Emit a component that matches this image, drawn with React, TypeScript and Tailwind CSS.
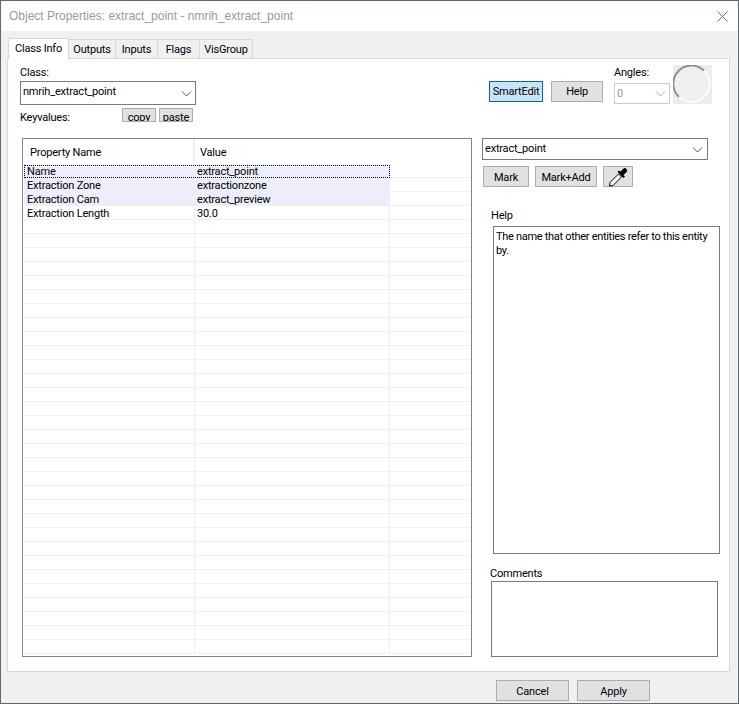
import React from 'react';

const Chevron: React.FC<{ className?: string }> = ({ className = '' }) => (
  <svg width="11" height="6" viewBox="0 0 11 6" className={className} fill="none" stroke="currentColor">
    <path d="M1 0.5 L5.5 5 L10 0.5" />
  </svg>
);

const Btn: React.FC<{ className?: string; active?: boolean; children: React.ReactNode }> = ({ className = '', active, children }) => (
  <div className={`flex items-center justify-center border ${active ? 'border-[#0a64ad] bg-[#cce4f7]' : 'border-[#adadad] bg-[#e1e1e1]'} ${className}`}>{children}</div>
);

const rows = [
  { name: 'Name', value: 'extract_point', tint: true, focus: true },
  { name: 'Extraction Zone', value: 'extractionzone', tint: true },
  { name: 'Extraction Cam', value: 'extract_preview', tint: true },
  { name: 'Extraction Length', value: '30.0' },
  ...Array.from({ length: 31 }, () => ({ name: '', value: '' })),
] as { name: string; value: string; tint?: boolean; focus?: boolean }[];

export default function App() {
  return (
    <div className='flex h-[704px] w-[739px] flex-col border border-[#5a6a70] bg-[#f0f0f0] font-["Roboto",Arial,sans-serif] text-[11px] leading-[14px] tracking-[-0.2px] text-black'>
      {/* Title bar */}
      <div className="flex h-[30px] shrink-0 items-center justify-between bg-white pl-[8px] pr-[10px]">
        <span className='font-["Liberation_Sans",Arial,sans-serif] text-[12px] tracking-normal text-[#9a9a9a]'>Object Properties: extract_point - nmrih_extract_point</span>
        <svg width="11" height="11" viewBox="0 0 11 11" stroke="#6f6f6f" fill="none">
          <path d="M0.5 0.5 L10.5 10.5 M10.5 0.5 L0.5 10.5" />
        </svg>
      </div>

      {/* Tabs */}
      <div className="mt-[7px] flex h-[20px] shrink-0 items-end pl-[7px]">
        <div className="z-10 -mb-px flex h-[21px] w-[61px] items-center justify-center border border-b-0 border-[#d9d9d9] bg-white pb-[1px]">Class Info</div>
        {[
          ['Outputs', 'w-[48px]'],
          ['Inputs', 'w-[43px]'],
          ['Flags', 'w-[43px]'],
          ['VisGroup', 'w-[54px]'],
        ].map(([t, w]) => (
          <div key={t} className={`-ml-px flex h-[19px] items-center justify-center border border-b-0 border-[#d9d9d9] bg-[#f0f0f0] pt-[2px] ${w}`}>
            {t}
          </div>
        ))}
      </div>

      {/* Panel */}
      <div className="ml-[6px] h-[614px] w-[723px] shrink-0 border border-[#d9d9d9] bg-white pl-[12px]">
        {/* Top row */}
        <div className="flex h-[79px]">
          <div className="w-[176px] pt-[7px]">
            <div className="pb-[1px]">Class:</div>
            <div className="flex h-[24px] items-center justify-between border border-[#7a7a7a] pl-[2px] pr-[3px] pb-[2px]">
              nmrih_extract_point
              <Chevron className="mt-[3px] text-[#555]" />
            </div>
            <div className="flex h-[17px] items-start pt-[3px]">
              <span className="mt-[3px] w-[102px]">Keyvalues:</span>
              <Btn className="h-[14px] w-[34px] items-start overflow-hidden pt-[2px]">copy</Btn>
              <Btn className="ml-[3px] h-[14px] w-[34px] items-start overflow-hidden pt-[2px]">paste</Btn>
            </div>
          </div>
          <Btn active className="ml-[293px] mt-[22px] h-[21px] w-[54px]">SmartEdit</Btn>
          <Btn className="ml-[8px] mt-[22px] h-[21px] w-[52px]">Help</Btn>
          <div className="ml-[11px] w-[56px] pt-[7px]">
            <div className="pb-[3px]">Angles:</div>
            <div className="flex h-[21px] items-center justify-between border border-[#cccccc] pl-[2px] pr-[3px] text-[#9a9a9a]">
              0
              <Chevron className="text-[#a8a8a8]" />
            </div>
          </div>
          <svg width="39" height="39" viewBox="0 0 39 39" className="ml-[3px] mt-[6px] bg-[#ececec]">
            <circle cx="19.5" cy="19.5" r="18" fill="#f0f0f0" />
            <path d="M31 5.5 A18 18 0 0 1 6 32" fill="none" stroke="#ffffff" strokeWidth="1.5" />
            <path d="M6 32 A18 18 0 0 1 31 5.5" fill="none" stroke="#8f8f8f" strokeWidth="2" />
            <rect x="19" y="19" width="1" height="1" fill="#ffffff" />
          </svg>
        </div>

        {/* Main row */}
        <div className="flex">
          {/* Property table */}
          <div className="ml-[2px] h-[519px] w-[450px] overflow-hidden border border-[#82828a] pl-px">
            <div className="flex h-[25px]">
              <div className="flex w-[171px] items-center border-r-2 border-[#f0f0f0] pl-[6px] pt-[3px]">Property Name</div>
              <div className="flex items-center pl-[5px] pt-[3px]">Value</div>
            </div>
            {rows.map((r, i) => (
              <div key={i} className="relative flex h-[14px]">
                <div className={`flex h-full w-[171px] items-center border-r border-b border-[#f0f0f0] pl-[3px] pt-[3px] ${r.tint ? 'bg-[#ededfb]' : ''}`}>{r.name}</div>
                <div className={`flex h-full w-[195px] items-center border-r border-b border-[#f0f0f0] pl-[2px] pt-[3px] ${r.tint ? 'bg-[#ededfb]' : ''}`}>{r.value}</div>
                <div className="h-full flex-1 border-b border-[#f0f0f0]" />
                {r.focus && <div className="absolute left-0 top-[1px] h-[13px] w-[366px] border border-dotted border-black" />}
              </div>
            ))}
          </div>

          {/* Right column */}
          <div className="ml-[10px] w-[226px]">
            <div className="flex h-[22px] items-center justify-between border border-[#7a7a7a] pl-[2px] pr-[4px]">
              extract_point
              <Chevron className="mt-[2px] text-[#555]" />
            </div>
            <div className="mt-[6px] flex pl-px">
              <Btn className="h-[21px] w-[46px] pt-[2px]">Mark</Btn>
              <Btn className="ml-[6px] h-[21px] w-[62px] pt-[2px]">Mark+Add</Btn>
              <Btn className="ml-[6px] h-[21px] w-[30px]">
                <svg width="20" height="20" viewBox="0 0 20 20">
                  <path d="M1.5 19 L2 15.5 L10.5 7 L13.5 10 L5 18.5 Z" fill="#fff" stroke="#000" />
                  <path d="M9.5 5 L15.5 11 L17 9.5 L15.5 8 L19 4.5 Q19.5 1 16 1 L12.5 4.5 L11 3.5 Z" fill="#000" />
                </svg>
              </Btn>
            </div>
            <div className="ml-[9px] mt-[22px]">Help</div>
            <div className="ml-[11px] mt-[3px] h-[328px] w-[227px] border border-[#7a7a7a] pl-[2px] pr-[2px] pt-[3px] tracking-[-0.3px]">
              The name that other entities refer to this entity by.
            </div>
            <div className="ml-[8px] mt-[13px]">Comments</div>
            <div className="ml-[9px] h-[76px] w-[227px] border border-[#7a7a7a]" />
          </div>
        </div>
      </div>

      {/* Footer */}
      <div className="mt-[8px] flex pl-[495px]">
        <Btn className="h-[21px] w-[73px] pt-[2px]">Cancel</Btn>
        <Btn className="ml-[8px] h-[21px] w-[73px] pt-[2px]">Apply</Btn>
      </div>
    </div>
  );
}
